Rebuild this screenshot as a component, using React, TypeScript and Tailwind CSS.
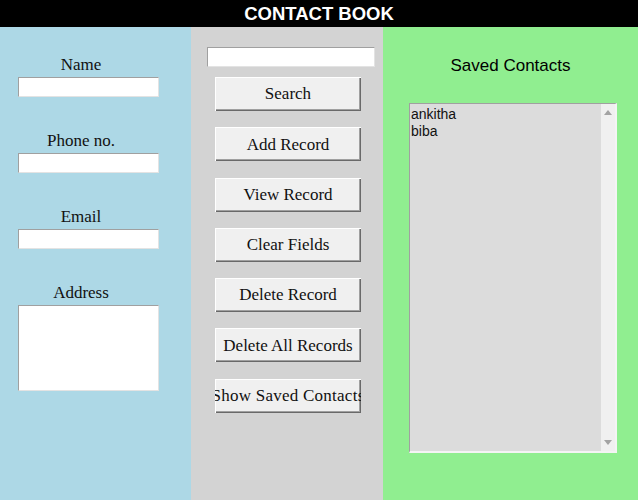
import React from 'react';

const serif = { fontFamily: '"Liberation Serif", "Times New Roman", serif' };
const sans = { fontFamily: '"Liberation Sans", Arial, sans-serif' };

const fields = [
  { label: 'Name', multi: false },
  { label: 'Phone no.', multi: false },
  { label: 'Email', multi: false },
  { label: 'Address', multi: true },
];

const buttons = [
  'Search',
  'Add Record',
  'View Record',
  'Clear Fields',
  'Delete Record',
  'Delete All Records',
  'Show Saved Contacts',
];

const contacts = ['ankitha', 'biba'];

// tk 風の入力欄
const Entry = ({ className = '' }: { className?: string }) => (
  <div
    className={`bg-white border-t border-l border-[#a0a0a0] border-r border-b border-r-[#e3e3e3] border-b-[#e3e3e3] ${className}`}
  />
);

export default function App() {
  return (
    <div className="w-[638px] h-[500px] flex flex-col overflow-hidden">
      <div
        className="h-[27px] bg-black text-white font-bold text-[18.5px] leading-[27px] text-center"
        style={sans}
      >
        CONTACT BOOK
      </div>

      <div className="flex flex-1">
        {/* 入力欄 */}
        <div className="w-[191px] bg-[#add8e6] pt-[29px] pl-[18px] flex flex-col gap-[35px]" style={serif}>
          {fields.map((f) => (
            <div key={f.label} className="flex flex-col">
              <div className="w-[126px] h-[21px] text-center text-[17px] leading-[18px] text-[#111]">
                {f.label}
              </div>
              <Entry className={f.multi ? 'w-[141px] h-[86px]' : 'w-[141px] h-[20px]'} />
            </div>
          ))}
        </div>

        {/* ボタン */}
        <div className="w-[192px] bg-[#d3d3d3] pt-[20px] flex flex-col" style={serif}>
          <Entry className="ml-[16px] w-[168px] h-[20px]" />
          <div className="mt-[10px] ml-[24px] flex flex-col gap-[16.3px]">
            {buttons.map((b) => (
              <div
                key={b}
                className="w-[146px] h-[34px] bg-[#f0f0f0] flex items-center justify-center overflow-hidden whitespace-nowrap text-[17px] text-[#111] shadow-[inset_1px_1px_#ffffff,inset_-1px_-1px_#696969,inset_-2px_-2px_#a0a0a0]"
              >
                <span className={b === 'Show Saved Contacts' ? 'tracking-[0.25px]' : ''}>{b}</span>
              </div>
            ))}
          </div>
        </div>

        {/* 保存済み連絡先 */}
        <div className="flex-1 bg-[#90ee90] flex flex-col" style={sans}>
          <div className="mt-[28px] h-[22px] text-center text-[17px] leading-[22px] text-black">
            Saved Contacts
          </div>
          <div className="mt-[26px] ml-[26px] w-[208px] h-[350px] flex bg-[#f0f0f0] border-t border-l border-[#a0a0a0] border-r-2 border-b-2 border-r-[#f4f4f4] border-b-[#f4f4f4]">
            <div className="flex-1 bg-[#dcdcdc] pl-[1px] pt-[2px] text-[14px] leading-[17px] text-[#111]">
              {contacts.map((c) => (
                <div key={c}>{c}</div>
              ))}
            </div>
            <div className="w-[14px] bg-[#f0f0f0] flex flex-col justify-between items-center py-[6px]">
              <svg width="8" height="5" viewBox="0 0 8 5">
                <path d="M0 5 L4 0 L8 5 Z" fill="#a3a3a3" />
              </svg>
              <svg width="8" height="5" viewBox="0 0 8 5">
                <path d="M0 0 L4 5 L8 0 Z" fill="#a3a3a3" />
              </svg>
            </div>
          </div>
        </div>
      </div>
    </div>
  );
}
